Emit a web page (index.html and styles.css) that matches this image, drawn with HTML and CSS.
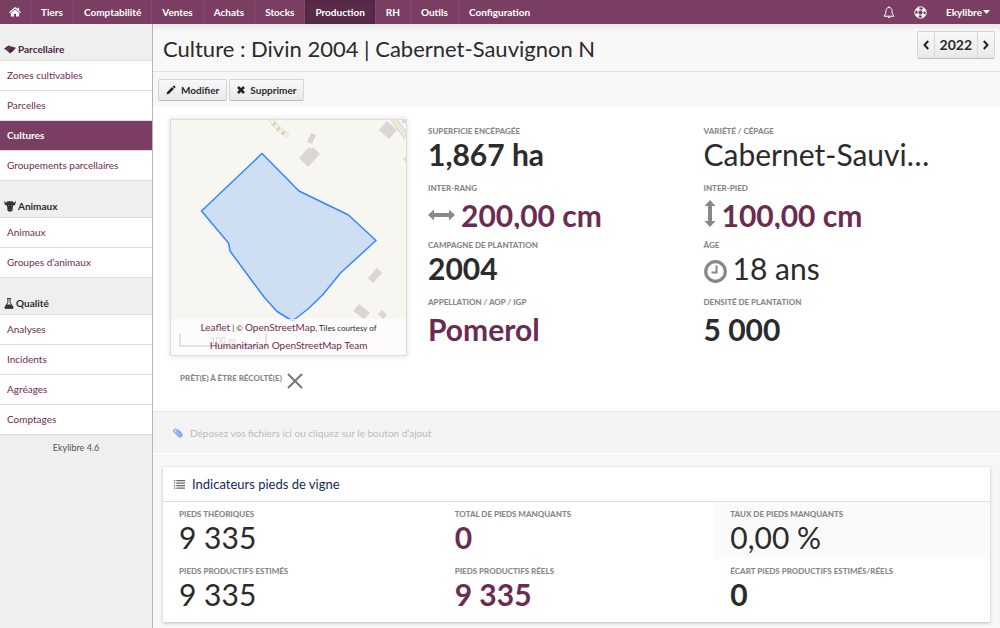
FILE: index.html
```html
<!DOCTYPE html>
<html lang="fr">
<head>
<meta charset="utf-8">
<title>Culture : Divin 2004 | Cabernet-Sauvignon N</title>
<link rel="stylesheet" href="styles.css">
</head>
<body>
<header class="topbar">
  <nav class="topnav">
    <a class="topnav-item topnav-home" href="#" aria-label="Accueil"><svg width="12" height="10" viewBox="0 0 12 10" fill="#fff"><path d="M6 0 0 5.2l.8.8L6 1.600l5.200 4.400.8-.8-1.900-1.700V.7H8.500v1.400z"/><path d="M6 2.500 1.800 6v3.500h3.200V6.700h2v2.800h3.200V6z"/></svg></a>
    <a class="topnav-item" href="#">Tiers</a>
    <a class="topnav-item" href="#">Comptabilité</a>
    <a class="topnav-item" href="#">Ventes</a>
    <a class="topnav-item" href="#">Achats</a>
    <a class="topnav-item" href="#">Stocks</a>
    <a class="topnav-item active" href="#">Production</a>
    <a class="topnav-item" href="#">RH</a>
    <a class="topnav-item" href="#">Outils</a>
    <a class="topnav-item" href="#">Configuration</a>
  </nav>
  <div class="topbar-tools">
    <button class="tool" aria-label="Notifications"><svg width="12" height="13" viewBox="0 0 12 13" fill="none" stroke="#fff"><path d="M6 1.500c-2 0-3 1.400-3 3.200C3 7.500 2.300 8.700.9 10.200h10.200C9.700 8.700 9 7.500 9 4.700 9 2.900 8 1.500 6 1.500zM6 .2v1.300M4.800 10.600c.2 1.500 2.200 1.500 2.400 0"/></svg></button>
    <button class="tool" aria-label="Aide"><svg width="13" height="13" viewBox="0 0 13 13" fill="none" stroke="#fff"><circle cx="6.500" cy="6.500" r="5.700"/><circle cx="6.500" cy="6.500" r="2.600"/><circle cx="6.500" cy="6.500" r="4.200" stroke-width="2.600" stroke-dasharray="3.300 3.300" stroke-dashoffset="-1.650"/></svg></button>
    <button class="tool user">Ekylibre<svg width="7" height="4" viewBox="0 0 7 4" fill="#fff"><path d="M0 0h7L3.500 4z"/></svg></button>
  </div>
</header>
<div class="shell">
  <aside class="sidebar">
    <h2 class="side-title side-title-first"><svg width="12" height="9" viewBox="0 0 12 9"><path fill="#4e2440" d="M0 3.700 4.500.5 7.300 1.600 12 2.800 8.600 6.600 6 8.500 3.600 6.100z"/><path stroke="#9b7c90" stroke-width=".5" fill="none" d="M3.500 6 8 1.800M2 4.900l4.500-3.600"/></svg>Parcellaire</h2>
    <nav>
      <a class="side-item" href="#">Zones cultivables</a>
      <a class="side-item" href="#">Parcelles</a>
      <a class="side-item active" href="#">Cultures</a>
      <a class="side-item" href="#">Groupements parcellaires</a>
    </nav>
    <h2 class="side-title"><svg width="12" height="12" viewBox="0 0 12 12" fill="#333"><path d="M.4.3C.2 1.500.9 2.400 2.300 2.500L3.500 1.300h5l1.200 1.200c1.400-.1 2.100-1 1.900-2.200.8 1.500.3 2.800-.9 3.200l1 .2c-.5 1.200-1.300 1.700-2.300 1.600l-.9 3 .4 1.500L7.600 11.500H4.400L3.100 9.800l.4-1.500-.9-3C1.600 5.400.8 4.900.3 3.700l1-.2C.1 3.100-.4 1.800.4.3z"/><path fill="#aaa" d="M3.800 5.100l1.300.6-.7.6zM8.200 5.100l-1.300.6.7.6zM4.500 9.300h.9v.8zM7.500 9.300h-.9v.8z"/></svg>Animaux</h2>
    <nav>
      <a class="side-item" href="#">Animaux</a>
      <a class="side-item" href="#">Groupes d’animaux</a>
    </nav>
    <h2 class="side-title"><svg width="10" height="11" viewBox="0 0 10 11"><path fill="none" stroke="#333" d="M3 .6h4M3.900.6v3.700L.8 9.600q-.2.800.6.800h7.200q.8 0 .6-.8L6.100 4.300V.6"/><path fill="#333" d="M2.600 6.600h4.800L9.200 10H.8z"/></svg>Qualité</h2>
    <nav>
      <a class="side-item" href="#">Analyses</a>
      <a class="side-item" href="#">Incidents</a>
      <a class="side-item" href="#">Agréages</a>
      <a class="side-item" href="#">Comptages</a>
    </nav>
    <p class="version">Ekylibre 4.6</p>
  </aside>
  <main class="main">
    <div class="heading">
      <h1 class="title">Culture : Divin 2004 | Cabernet-Sauvignon N</h1>
      <div class="period">
        <button class="period-btn" aria-label="Précédent"><svg width="6" height="10" viewBox="0 0 6 10" fill="none" stroke="#222" stroke-width="2"><path d="M5.200 1 1.500 5l3.700 4"/></svg></button>
        <button class="period-btn period-year">2022</button>
        <button class="period-btn" aria-label="Suivant"><svg width="6" height="10" viewBox="0 0 6 10" fill="none" stroke="#222" stroke-width="2"><path d="M.8 1l3.700 4L.8 9"/></svg></button>
      </div>
    </div>
    <div class="toolbar">
      <button class="btn"><svg width="10" height="10" viewBox="0 0 10 10" fill="#222"><path d="M.5 9.500l.7-2.600L6 2.100l1.900 1.900-4.800 4.800zM6.600 1.500 7.400.7q.5-.4 1 0l.9.9q.4.500 0 1l-.8.8z"/></svg>Modifier</button>
      <button class="btn"><svg width="8" height="8" viewBox="0 0 8 8" stroke="#222" stroke-width="2.600"><path d="M1 1l6 6M7 1 1 7"/></svg>Supprimer</button>
    </div>
    <section class="overview">
      <div class="map-column">
        <div class="map">
          <svg class="map-canvas" viewBox="171 120 235 235">
            <path fill="#f7f6f1" d="M171 120h235v235H171z"/>
            <g fill="none"><path stroke="#dedac4" stroke-width="5" d="M270 118c5 8 10 13 18 18"/><path stroke="#f4f1e0" stroke-width="3.500" d="M270 118c5 8 10 13 18 18"/><path stroke="#c9c09a" stroke-width="3.500" stroke-dasharray="1.500 5" d="M270 118c5 8 10 13 18 18"/><path stroke="#d6d1b8" stroke-width="6" d="M393 118l14 20"/><path stroke="#f3f0de" stroke-width="4" d="M393 118l14 20"/><path stroke="#d6d1b8" stroke-width=".7" d="M393 118l14 20"/></g>
            <g fill="#dad6d5"><path d="M311 133l5 2-4 9-5-2zM309 147l2 2 2-2 7 7-12 13-9-9zM387 121l10 9-8 9-10-9zM402 120h4v3h-4zM406 157v5l-3-3zM377 268l5 5-9 10-5-5zM359 304l11 9-6 6-11-8zM382 310l5 5-4 4-5-5zM348 340l5 4-2 3h-7z"/></g>
            <path fill="#3388ff" fill-opacity=".2" stroke="#3388ff" stroke-width="1.500" stroke-linejoin="round" d="M262 153.500 299 191l49.500 24L376 240.500 340.500 273 323 294.500 308 309l-15.500 12L277 311.500 264 297 248 275.500 230 251l-1.500-8-27-32z"/>
          </svg>
          <div class="map-scale">100 m</div>
          <div class="map-credit"><a href="#">Leaflet</a> | © <a href="#">OpenStreetMap</a>, Tiles courtesy of <a href="#">Humanitarian OpenStreetMap Team</a></div>
        </div>
        <div class="ready"><span class="label">Prêt(e) à être récolté(e)</span><svg width="16" height="16" viewBox="0 0 16 16" stroke="#777" stroke-width="2" aria-label="Non"><path d="M1 1l14 14M15 1 1 15"/></svg></div>
      </div>
      <div class="facts">
        <div class="fact"><div class="label">Superficie encépagée</div><div class="value strong">1,867 ha</div></div>
        <div class="fact"><div class="label">Variété / Cépage</div><div class="value">Cabernet-Sauvignon N</div></div>
        <div class="fact low"><div class="label">Inter-rang</div><div class="value strong linked"><svg class="arrow-wide" width="27" height="12" viewBox="0 0 27 12" fill="#888"><path d="M0 6l6-5.500V4h15V.5L27 6l-6 5.500V8H6v3.500z"/></svg>200,00 cm</div></div>
        <div class="fact low"><div class="label">Inter-pied</div><div class="value strong linked"><svg width="12" height="27" viewBox="0 0 12 27" fill="#888"><path d="M6 0l5.500 6H8v15h3.500L6 27 .5 21H4V6H.5z"/></svg>100,00 cm</div></div>
        <div class="fact"><div class="label">Campagne de plantation</div><div class="value strong">2004</div></div>
        <div class="fact"><div class="label">Âge</div><div class="value"><svg class="clock" width="23" height="23" viewBox="0 0 23 23" fill="none" stroke="#888"><circle cx="11.500" cy="11.500" r="9.800" stroke-width="3.200"/><path stroke-width="2" d="M12.500 5.500v7H7.500"/></svg>18 ans</div></div>
        <div class="fact low"><div class="label">Appellation / AOP / IGP</div><div class="value strong linked">Pomerol</div></div>
        <div class="fact low"><div class="label">Densité de plantation</div><div class="value strong">5 000</div></div>
      </div>
    </section>
    <button class="dropzone"><svg width="10" height="10" viewBox="0 0 10 10" fill="none" stroke="#7ba3ea" stroke-width="1.100"><path d="M2.800 3.200l3.700 4.200c.9.900 2-.2 1.200-1.100L3.500 1.600C2 .2-.1 2.200 1.200 3.700l4.200 4.700c2 2 4.900-.6 3.200-2.700L5 1.700"/></svg>Déposez vos fichiers ici ou cliquez sur le bouton d’ajout</button>
    <section class="card">
      <h2 class="card-title"><svg width="11" height="9" viewBox="0 0 11 9" fill="#666"><path d="M0 0h1.300v1.200H0zM2.300 0H11v1.200H2.300zM0 2.500h1.300v1.200H0zM2.300 2.500H11v1.200H2.300zM0 5h1.300v1.200H0zM2.300 5H11v1.200H2.300zM0 7.500h1.300v1.200H0zM2.300 7.500H11v1.200H2.300z"/></svg>Indicateurs pieds de vigne</h2>
      <div class="indicators">
        <div class="fact"><div class="label">Pieds théoriques</div><div class="value">9 335</div></div>
        <div class="fact"><div class="label">Total de pieds manquants</div><div class="value strong linked">0</div></div>
        <div class="fact hovered"><div class="label">Taux de pieds manquants</div><div class="value">0,00 %</div></div>
        <div class="fact"><div class="label">Pieds productifs estimés</div><div class="value">9 335</div></div>
        <div class="fact"><div class="label">Pieds productifs réels</div><div class="value strong linked">9 335</div></div>
        <div class="fact"><div class="label">Écart pieds productifs estimés/réels</div><div class="value strong">0</div></div>
      </div>
    </section>
  </main>
</div>
</body>
</html>
```
FILE: styles.css
```css
* { box-sizing: border-box; }
body {
  margin: 0;
  min-height: 100vh;
  display: flex;
  flex-direction: column;
  font: 10px/14px Lato, sans-serif;
  color: #2b2b2b;
  background: #f7f7f7;
}
h1, h2, p { margin: 0; }
a { color: #6b2c53; text-decoration: none; }
button { font: inherit; color: inherit; cursor: pointer; }
svg { flex: none; }

.topbar {
  display: flex;
  justify-content: space-between;
  height: 24px;
  background: #793e61;
  color: #fff;
  font-weight: 700;
}
.topnav { display: flex; }
.topnav-item {
  display: flex;
  align-items: center;
  padding: 0 10px;
  color: #fff;
  border-right: 1px solid #834a6b;
}
.topnav-home { padding: 0 9px; }
.topnav-item:last-child { border-right: 0; }
.topnav-item.active { background: #592b48; box-shadow: inset 0 0 4px #43203a; }
.topbar-tools { display: flex; align-items: center; padding-right: 10px; gap: 19px; }
.tool { display: flex; align-items: center; padding: 0; border: 0; background: none; }
.user { gap: 1px; font-weight: 700; }

.shell { flex: 1; display: flex; }
.sidebar { width: 153px; flex: none; background: #efefef; border-right: 1px solid #b5b5b5; }
.side-title {
  display: flex;
  align-items: center;
  gap: 2px;
  height: 37px;
  padding: 14px 4px 0;
  border-bottom: 1px solid #ddd;
  font-size: 10px;
  font-weight: 700;
}
.side-title-first { color: #4e2440; }
.side-item {
  display: flex;
  align-items: center;
  height: 30px;
  padding: 0 7px 1px;
  background: #fff;
  border-bottom: 1px solid #ddd;
}
.side-item.active { background: #793e61; color: #fff; font-weight: 700; }
.version { padding: 6px 0; text-align: center; font-size: 9px; color: #555; }

.main { flex: 1; min-width: 0; }
.heading {
  display: flex;
  justify-content: space-between;
  height: 48px;
  padding: 0 5px 0 10px;
  border-bottom: 1px solid #e2e2e2;
  background: linear-gradient(#e9e9e9, #f8f8f8 8px);
}
.title { font-size: 22px; line-height: 50px; font-weight: 400; }
.period { display: flex; height: 28px; margin-top: 7px; }
.period-btn {
  display: flex;
  align-items: center;
  padding: 0 5px;
  border: 1px solid #d5d5d5;
  border-bottom-color: #bbb;
  border-left-width: 0;
  background: linear-gradient(#f8f8f8, #e9e9e9);
}
.period-btn:first-child { border-left-width: 1px; border-radius: 2px 0 0 2px; }
.period-btn:last-child { border-radius: 0 2px 2px 0; }
.period-year { font-size: 14px; font-weight: 700; }
.toolbar { display: flex; gap: 2px; height: 35px; padding: 7px 5px; }
.btn {
  display: flex;
  align-items: center;
  gap: 5px;
  height: 22px;
  padding: 0 7px;
  border: 1px solid #d5d5d5;
  border-bottom-color: #bbb;
  border-radius: 2px;
  background: linear-gradient(#f8f8f8, #e9e9e9);
  font-weight: 700;
}

.overview { display: flex; gap: 20px; padding: 12px 22px 22px 17px; background: #fff; }
.map-column { flex: none; width: 237px; }
.map {
  position: relative;
  height: 237px;
  border: 1px solid #ddd;
  box-shadow: 0 0 6px #ddd;
  overflow: hidden;
}
.map-canvas { display: block; width: 100%; height: 100%; }
.map-scale {
  position: absolute;
  left: 8px;
  bottom: 8px;
  width: 88px;
  height: 13px;
  border: 2px solid #999;
  border-top: 0;
  font-size: 9px;
  line-height: 13px;
  text-align: center;
  color: #777;
}
.map-credit {
  position: absolute;
  left: 0;
  right: 0;
  bottom: 0;
  padding: 0 24px;
  background: rgba(255, 255, 255, .7);
  font-size: 8px;
  line-height: 17px;
  text-align: center;
}
.map-credit a { font-size: 10px; }
.ready { display: flex; gap: 5px; padding: 16px 10px 0; }
.ready svg { margin-top: 1px; }
.label {
  font-size: 8px;
  line-height: 12px;
  font-weight: 900;
  text-transform: uppercase;
  color: #888;
  white-space: nowrap;
}
.facts { flex: 1; min-width: 0; display: grid; grid-template-columns: 1fr 1fr; align-content: start; }
.facts .fact { padding: 6px 38px 0 1px; }
.fact { height: 57px; min-width: 0; }
.value {
  font-size: 30px;
  line-height: 34px;
  white-space: nowrap;
  overflow: hidden;
  text-overflow: ellipsis;
}
.value svg { margin-right: 6px; }
.value .clock { vertical-align: -3px; }
.value .arrow-wide { vertical-align: 6px; }
.strong { font-weight: 700; }
.linked { color: #6b2c53; }
.low .value { height: 35px; padding-top: 4px; }

.dropzone {
  display: flex;
  align-items: center;
  gap: 7px;
  width: 100%;
  height: 43px;
  padding: 0 20px;
  border: 0;
  border-top: 1px solid #e6e6e6;
  border-bottom: 1px solid #fff;
  background: #f4f4f4;
  color: #bbb;
}
.card { margin: 13px 10px 7px; background: #fff; box-shadow: 0 1px 3px #bbb; }
.card-title {
  display: flex;
  align-items: center;
  gap: 7px;
  height: 35px;
  padding: 0 11px;
  border-bottom: 1px solid #ddd;
  font-size: 13px;
  font-weight: 400;
  color: #102a5c;
}
.indicators { display: grid; grid-template-columns: repeat(3, 1fr); padding-bottom: 6px; }
.indicators .fact { padding: 6px 16px 0; }
.hovered { background: #fafafa; }
```
